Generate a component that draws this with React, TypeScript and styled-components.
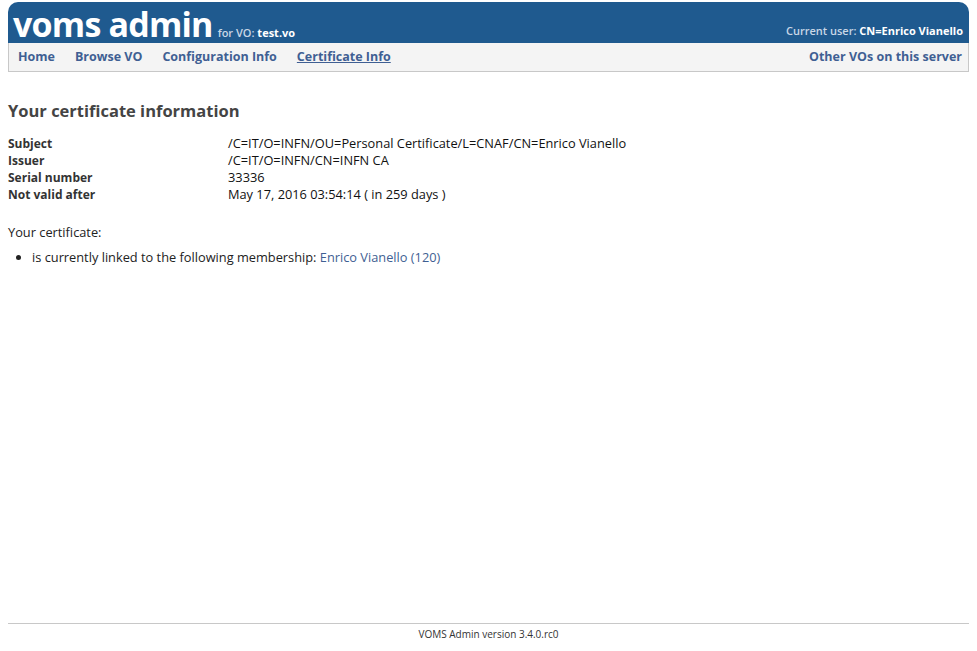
import { createGlobalStyle } from 'styled-components';
import styled from 'styled-components';

const GlobalStyle = createGlobalStyle`
  html, body {
    margin: 0;
    padding: 0;
    background: #ffffff;
  }
  body {
    font-family: 'Open Sans', 'DejaVu Sans', sans-serif;
    font-size: 12.8px;
    color: #222;
  }
`;

const Page = styled.div`
  display: flex;
  flex-direction: column;
  min-height: 651px;
  padding: 2px 8px 0 8px;
  box-sizing: border-box;
`;

const Header = styled.div`
  background-color: #1f5a8f;
  border-radius: 10px 10px 0 0;
  height: 41px;
  display: flex;
  align-items: flex-end;
  justify-content: space-between;
  padding: 0 6px 0 5px;
  color: #fff;
`;

const Brand = styled.div`
  display: flex;
  align-items: baseline;
  gap: 5px;
`;

const Logo = styled.span`
  font-size: 34px;
  font-weight: 700;
  letter-spacing: -0.8px;
  line-height: 37px;
`;

const VoLabel = styled.span`
  font-size: 11px;
  color: #c9d7e6;
  font-weight: 600;
`;

const Strong = styled.span`
  color: #fff;
  font-weight: 700;
`;

const UserInfo = styled.div`
  font-size: 11px;
  font-weight: 600;
  color: #c9d7e6;
  padding-bottom: 5px;
`;

const NavBar = styled.div`
  background: #f4f4f4;
  border: 1px solid #c8c8c8;
  border-top: none;
  height: 26px;
  display: flex;
  align-items: center;
  justify-content: space-between;
  padding: 0 6px 2px 9px;
`;

const NavGroup = styled.div`
  display: flex;
  gap: 20px;
`;

const NavLink = styled.a<{ $active?: boolean }>`
  font-size: 12.5px;
  font-weight: 700;
  color: #3f5f93;
  text-decoration: ${(p) => (p.$active ? 'underline' : 'none')};
  cursor: pointer;
`;

const Content = styled.div`
  flex: 1;
  padding-top: 27px;
`;

const Title = styled.h2`
  font-size: 16.5px;
  font-weight: 700;
  color: #444;
  margin: 0 0 13px 0;
`;

const InfoTable = styled.div`
  display: grid;
  grid-template-columns: 220px 1fr;
  line-height: 17px;
`;

const Label = styled.div`
  font-size: 12px;
  font-weight: 700;
  color: #333;
`;

const Value = styled.div`
  color: #111;
`;

const Para = styled.p`
  margin: 21px 0 8px 0;
  line-height: 17px;
`;

const List = styled.ul`
  margin: 0;
  padding-left: 24px;
  line-height: 17px;
`;

const Link = styled.a`
  color: #3f5f93;
  text-decoration: none;
`;

const Footer = styled.div`
  border-top: 1px solid #c8c8c8;
  text-align: center;
  font-size: 10px;
  color: #333;
  padding: 3px 0 10px 0;
`;

const rows: [string, string][] = [
  ['Subject', '/C=IT/O=INFN/OU=Personal Certificate/L=CNAF/CN=Enrico Vianello'],
  ['Issuer', '/C=IT/O=INFN/CN=INFN CA'],
  ['Serial number', '33336'],
  ['Not valid after', 'May 17, 2016 03:54:14 ( in 259 days )'],
];

export default function App() {
  return (
    <>
      <GlobalStyle />
      <Page>
        <Header>
          <Brand>
            <Logo>voms admin</Logo>
            <VoLabel>
              for VO: <Strong>test.vo</Strong>
            </VoLabel>
          </Brand>
          <UserInfo>
            Current user: <Strong>CN=Enrico Vianello</Strong>
          </UserInfo>
        </Header>
        <NavBar>
          <NavGroup>
            <NavLink>Home</NavLink>
            <NavLink>Browse VO</NavLink>
            <NavLink>Configuration Info</NavLink>
            <NavLink $active>Certificate Info</NavLink>
          </NavGroup>
          <NavLink>Other VOs on this server</NavLink>
        </NavBar>
        <Content>
          <Title>Your certificate information</Title>
          <InfoTable>
            {rows.map(([k, v]) => (
              <>
                <Label key={k}>{k}</Label>
                <Value key={k + 'v'}>{v}</Value>
              </>
            ))}
          </InfoTable>
          <Para>Your certificate:</Para>
          <List>
            <li>
              is currently linked to the following membership:{' '}
              <Link>Enrico Vianello (120)</Link>
            </li>
          </List>
        </Content>
        <Footer>VOMS Admin version 3.4.0.rc0</Footer>
      </Page>
    </>
  );
}
